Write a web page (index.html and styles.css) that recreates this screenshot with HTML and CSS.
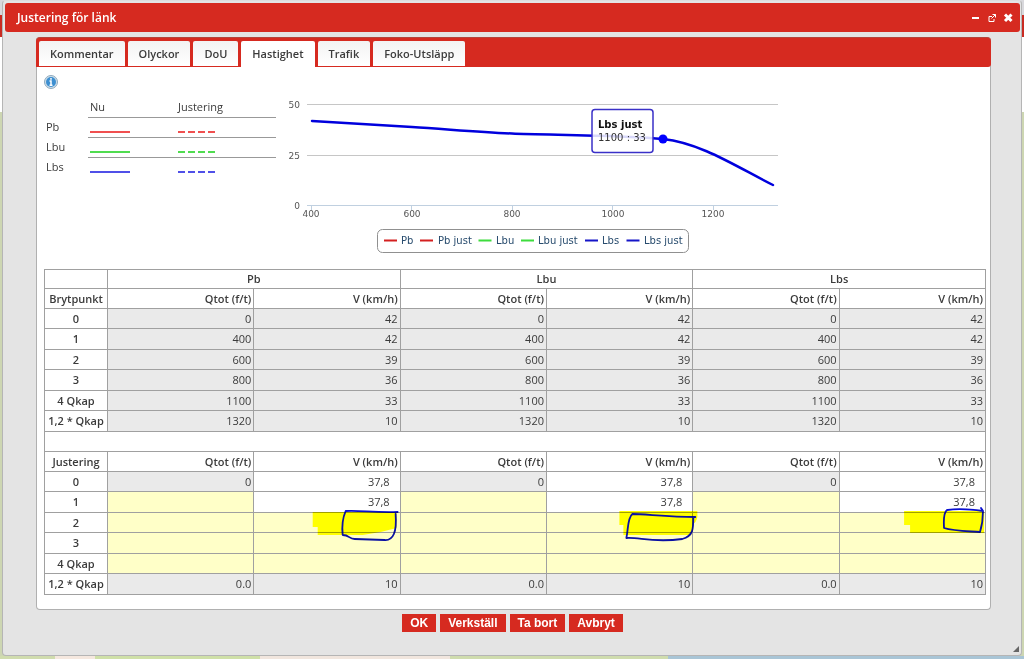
FILE: index.html
```html
<!DOCTYPE html>
<html lang="sv">
<head>
<meta charset="utf-8">
<title>Justering för länk</title>
<link rel="stylesheet" href="styles.css">
</head>
<body>
<main class="dialog">
  <header class="titlebar">
    <h1>Justering för länk</h1>
    <div class="window-actions">
      <button type="button" aria-label="Minimera"><svg width="10" height="10" viewBox="0 0 10 10"><path d="M1 5h7" stroke="#fff" stroke-width="2"/></svg></button>
      <button type="button" aria-label="Öppna i nytt fönster"><svg width="10" height="10" viewBox="0 0 10 10" fill="none" stroke="#fff"><path d="M5 3.5H2v5h5V6M4.5 5.5l4-4M5.5 1.500h3v3"/></svg></button>
      <button type="button" aria-label="Stäng"><svg width="10" height="10" viewBox="0 0 10 10"><path d="M2 1.500l6.500 6.500M8.500 1.500l-6.500 6.500" stroke="#fff" stroke-width="3"/></svg></button>
    </div>
  </header>
  <section class="panel">
    <div class="tabs" role="tablist">
      <button type="button" role="tab">Kommentar</button>
      <button type="button" role="tab">Olyckor</button>
      <button type="button" role="tab">DoU</button>
      <button type="button" role="tab" class="active" aria-selected="true">Hastighet</button>
      <button type="button" role="tab">Trafik</button>
      <button type="button" role="tab">Foko-Utsläpp</button>
    </div>
    <div class="content">
      <div class="overview">
        <div class="key">
          <button type="button" class="info" aria-label="Information"><svg width="14" height="14" viewBox="0 0 14 14"><circle cx="7" cy="7" r="6.500" fill="#cfdfea" stroke="#8fa9bd"/><circle cx="7" cy="7" r="5" fill="#3d8fd1"/><path d="M7 3v1.800M5.500 6H7v4M5.500 10.200h3" stroke="#fff" stroke-width="1.500" fill="none"/></svg></button>
          <table class="key-table">
            <thead><tr><td></td><th scope="col">Nu</th><th scope="col">Justering</th></tr></thead>
            <tbody>
              <tr><th scope="row">Pb</th><td><span class="line pb"></span></td><td><span class="line dashed pb"></span></td></tr>
              <tr><th scope="row">Lbu</th><td><span class="line lbu"></span></td><td><span class="line dashed lbu"></span></td></tr>
              <tr><th scope="row">Lbs</th><td><span class="line lbs"></span></td><td><span class="line dashed lbs"></span></td></tr>
            </tbody>
          </table>
        </div>
        <svg class="chart" width="510" height="160" viewBox="280 94 510 160" role="img" aria-label="Hastighet per flöde">
          <g stroke="#c6c6c6"><path d="M307 104.500H778M307 155.500H778"/></g>
          <path d="M307 205.500H778M311.500 205v5M411.500 205v5M512.500 205v5M612.500 205v5M713.500 205v5" stroke="#c0d0e0" fill="none"/>
          <g class="axis" text-anchor="end"><text x="300" y="108">50</text><text x="300" y="159">25</text><text x="300" y="209">0</text></g>
          <g class="axis" text-anchor="middle"><text x="311" y="217">400</text><text x="412" y="217">600</text><text x="512" y="217">800</text><text x="613" y="217">1000</text><text x="713" y="217">1200</text></g>
          <path d="M312 121C345 123 379 125 412 127S478 132 512 133.500S625 135 663 139S737 167 773 185" fill="none" stroke="#00d" stroke-width="2.500" stroke-linecap="round"/>
          <circle cx="663" cy="139" r="4.500" fill="#00f"/>
          <rect x="592" y="109.500" width="61" height="43" rx="3" fill="#fff" fill-opacity=".85" stroke="#3a30c8" stroke-width="1.500"/>
          <text class="tip strong" x="598" y="128">Lbs just</text><text class="tip" x="598" y="141">1100 : 33</text>
          <rect x="377.500" y="229.500" width="311" height="23" rx="5" fill="#fff" stroke="#909090"/>
          <g stroke-width="2"><path d="M384 240.500h13M420 240.500h13" stroke="#d42020"/><path d="M478.500 240.500h13M521 240.500h13" stroke="#3ddc3d"/><path d="M585 240.500h13M626.500 240.500h13" stroke="#1515c8"/></g>
          <g class="series"><text x="401" y="244">Pb</text><text x="438" y="244">Pb just</text><text x="496" y="244">Lbu</text><text x="538" y="244">Lbu just</text><text x="602" y="244">Lbs</text><text x="644" y="244">Lbs just</text></g>
        </svg>
      </div>
      <div class="grid">
        <table class="data">
          <colgroup><col class="label-col"><col span="6"></colgroup>
          <tbody>
            <tr class="head"><td></td><th colspan="2" scope="colgroup">Pb</th><th colspan="2" scope="colgroup">Lbu</th><th colspan="2" scope="colgroup">Lbs</th></tr>
            <tr class="units"><th scope="col">Brytpunkt</th><th scope="col">Qtot (f/t)</th><th scope="col">V (km/h)</th><th scope="col">Qtot (f/t)</th><th scope="col">V (km/h)</th><th scope="col">Qtot (f/t)</th><th scope="col">V (km/h)</th></tr>
            <tr><th scope="row">0</th><td>0</td><td>42</td><td>0</td><td>42</td><td>0</td><td>42</td></tr>
            <tr><th scope="row">1</th><td>400</td><td>42</td><td>400</td><td>42</td><td>400</td><td>42</td></tr>
            <tr><th scope="row">2</th><td>600</td><td>39</td><td>600</td><td>39</td><td>600</td><td>39</td></tr>
            <tr><th scope="row">3</th><td>800</td><td>36</td><td>800</td><td>36</td><td>800</td><td>36</td></tr>
            <tr><th scope="row">4 Qkap</th><td>1100</td><td>33</td><td>1100</td><td>33</td><td>1100</td><td>33</td></tr>
            <tr><th scope="row">1,2 * Qkap</th><td>1320</td><td>10</td><td>1320</td><td>10</td><td>1320</td><td>10</td></tr>
            <tr class="gap"><td colspan="7"></td></tr>
            <tr class="units"><th scope="col">Justering</th><th scope="col">Qtot (f/t)</th><th scope="col">V (km/h)</th><th scope="col">Qtot (f/t)</th><th scope="col">V (km/h)</th><th scope="col">Qtot (f/t)</th><th scope="col">V (km/h)</th></tr>
            <tr><th scope="row">0</th><td>0</td><td class="set"><input aria-label="Pb V 0" value="37,8"></td><td>0</td><td class="set"><input aria-label="Lbu V 0" value="37,8"></td><td>0</td><td class="set"><input aria-label="Lbs V 0" value="37,8"></td></tr>
            <tr><th scope="row">1</th><td class="empty"><input aria-label="Pb Qtot 1"></td><td class="set"><input aria-label="Pb V 1" value="37,8"></td><td class="empty"><input aria-label="Lbu Qtot 1"></td><td class="set"><input aria-label="Lbu V 1" value="37,8"></td><td class="empty"><input aria-label="Lbs Qtot 1"></td><td class="set"><input aria-label="Lbs V 1" value="37,8"></td></tr>
            <tr><th scope="row">2</th><td class="empty"><input aria-label="Pb Qtot 2"></td><td class="empty"><input aria-label="Pb V 2"></td><td class="empty"><input aria-label="Lbu Qtot 2"></td><td class="empty"><input aria-label="Lbu V 2"></td><td class="empty"><input aria-label="Lbs Qtot 2"></td><td class="empty"><input aria-label="Lbs V 2"></td></tr>
            <tr><th scope="row">3</th><td class="empty"><input aria-label="Pb Qtot 3"></td><td class="empty"><input aria-label="Pb V 3"></td><td class="empty"><input aria-label="Lbu Qtot 3"></td><td class="empty"><input aria-label="Lbu V 3"></td><td class="empty"><input aria-label="Lbs Qtot 3"></td><td class="empty"><input aria-label="Lbs V 3"></td></tr>
            <tr><th scope="row">4 Qkap</th><td class="empty"><input aria-label="Pb Qtot 4"></td><td class="empty"><input aria-label="Pb V 4"></td><td class="empty"><input aria-label="Lbu Qtot 4"></td><td class="empty"><input aria-label="Lbu V 4"></td><td class="empty"><input aria-label="Lbs Qtot 4"></td><td class="empty"><input aria-label="Lbs V 4"></td></tr>
            <tr><th scope="row">1,2 * Qkap</th><td>0.0</td><td>10</td><td>0.0</td><td>10</td><td>0.0</td><td>10</td></tr>
          </tbody>
        </table>
        <svg class="marks" viewBox="44 269 943 326" preserveAspectRatio="none" aria-hidden="true">
          <g fill="#ff0"><path d="M313 512H397V528Q380 533 363 535H318V527H313z"/><path d="M620 511H698Q699 521 694 524L692 535H624V525H620z"/><path d="M905 511H985V533H911V525H905z"/></g>
          <g fill="none" stroke="#0a10d0" stroke-width="1.800" stroke-linecap="round" stroke-linejoin="round"><path d="M398 512C375 513 360 510 346 511C343 518 342 526 343 535C350 535 349 539 355 539L385 540Q398 541 396 514"/><path d="M696 517C670 517 645 514 633 514C628 518 629 529 627 538C640 537 653 543 683 539C694 536 694 529 694 517"/><path d="M982 508L984 511C970 509 960 508 948 510Q944 513 945 528C954 531 965 531 981 532Q984 522 984 511"/></g>
        </svg>
      </div>
    </div>
  </section>
  <footer class="actions">
    <button type="button">OK</button><button type="button">Verkställ</button><button type="button">Ta bort</button><button type="button">Avbryt</button>
  </footer>
  <svg class="resize" width="8" height="8" viewBox="0 0 8 8" aria-hidden="true"><path d="M7 1v6H1z" fill="#666"/></svg>
</main>
</body>
</html>
```
FILE: styles.css
```css
* { box-sizing: border-box; }
body {
  margin: 0;
  min-height: 100vh;
  padding: 0 2px 3px;
  display: flex;
  flex-direction: column;
  background: linear-gradient(90deg, #d0dcae 0 55px, #f5e8df 55px 95px, #cfe0a8 95px 260px, #f1e6de 260px 450px, #cfdcae 450px 668px, #a9c5d6 668px) bottom / 100% 3px no-repeat,
    linear-gradient(#d8d8dc 0 15px, #c92b22 15px 37px, #fff 37px 112px, #cdd6b2 112px);
  font: 11px/16px "Open Sans", "Noto Sans", sans-serif;
  color: #3b3b3b;
}
button, input { font: inherit; color: inherit; }
button { border: 0; padding: 0; background: none; }
.dialog {
  position: relative;
  flex: 1;
  display: flex;
  flex-direction: column;
  padding: 2px 1px 0 2px;
  background: #e4e4e4;
  border: 1px solid #b5b5b5;
  border-top-color: #ddd;
  border-radius: 4px;
}
.titlebar {
  display: flex;
  align-items: center;
  justify-content: space-between;
  height: 29px;
  padding: 0 7px 0 12px;
  background: #d62a20;
  border-radius: 3px;
  color: #fff;
}
.titlebar h1 { margin: 0; font-size: 12px; font-weight: 600; }
.window-actions { display: flex; gap: 6px; }
.window-actions button { width: 10px; height: 10px; }
svg { display: block; }
.panel {
  margin: 5px 29px 0 31px;
  background: #fff;
  border: 1px solid #b0b0b0;
  border-top: 0;
  border-radius: 4px;
}
.tabs {
  display: flex;
  gap: 3px;
  height: 30px;
  margin: 0 -1px;
  padding: 3px 3px 1px;
  background: #d62a20;
  border-top: 1px solid #b5453c;
  border-radius: 4px 4px 3px 0;
}
.tabs button {
  padding: 0 11px;
  background: linear-gradient(#f3f3f3, #fff);
  border-radius: 2px 2px 0 0;
  font-weight: 600;
}
.tabs .active { background: #fff; margin-bottom: -2px; padding-bottom: 2px; }
.content { padding: 8px 4px 14px 7px; }
.overview { display: flex; gap: 4px; }
.info { display: block; }
.key-table { margin-top: 8px; border-collapse: collapse; table-layout: fixed; width: 232px; }
.key-table th { font-weight: 400; text-align: left; padding: 0 2px; }
.key-table tr { height: 20px; }
.key-table tr > :first-child { width: 44px; padding: 0 2px; }
.key-table tr > :nth-child(2) { width: 88px; }
.key-table thead th, .key-table tbody tr:not(:last-child) td { border-bottom: 1px solid #999; }
.key-table td { padding: 9px 2px 0; }
.line { display: block; width: 40px; border-top: 2px solid; }
.line.pb { border-color: #f05050; }
.line.lbu { border-color: #50dc50; }
.line.lbs { border-color: #5050e8; }
.line.dashed {
  width: 37px;
  -webkit-mask: repeating-linear-gradient(90deg, #000 0 7px, transparent 7px 10px);
  mask: repeating-linear-gradient(90deg, #000 0 7px, transparent 7px 10px);
}
.chart { margin-top: 19px; }
.chart text { font-family: "DejaVu Sans", "Noto Sans", sans-serif; }
.axis { font-size: 9px; fill: #555; }
.series { font-size: 10px; fill: #274b6d; }
.tip { font-size: 10px; fill: #333; }
.strong { font-weight: 700; fill: #111; }
.grid { position: relative; margin-top: 15px; }
.data { width: 100%; border-collapse: collapse; table-layout: fixed; }
.label-col { width: 63px; }
.data tr { height: 20px; }
.data tr:nth-child(even):not(.units) { height: 21px; }
.data .head { height: 19px; }
.data th, .data td { padding: 0 2px; border: 1px solid #a0a0a0; line-height: 16px; }
.data th { font-weight: 600; text-align: center; }
.data td { text-align: right; background: #eaeaea; }
.data .units th + th { text-align: right; }
.data .head td, .data .gap td, .data .set { background: #fff; }
.data .empty { background: #ffffc8; }
.data input {
  display: block;
  width: 100%;
  height: 16px;
  padding: 0 8px 0 0;
  border: 0;
  background: transparent;
  text-align: right;
}
.marks { position: absolute; inset: 0; width: 100%; height: 100%; mix-blend-mode: multiply; pointer-events: none; }
.actions { display: flex; justify-content: center; gap: 4px; padding-top: 4px; }
.actions button {
  height: 18px;
  padding: 0 8px;
  background: #d62a20;
  color: #fff;
  font: 700 12px/18px "Liberation Sans", sans-serif;
}
.resize { position: absolute; right: 1px; bottom: 2px; }
```
